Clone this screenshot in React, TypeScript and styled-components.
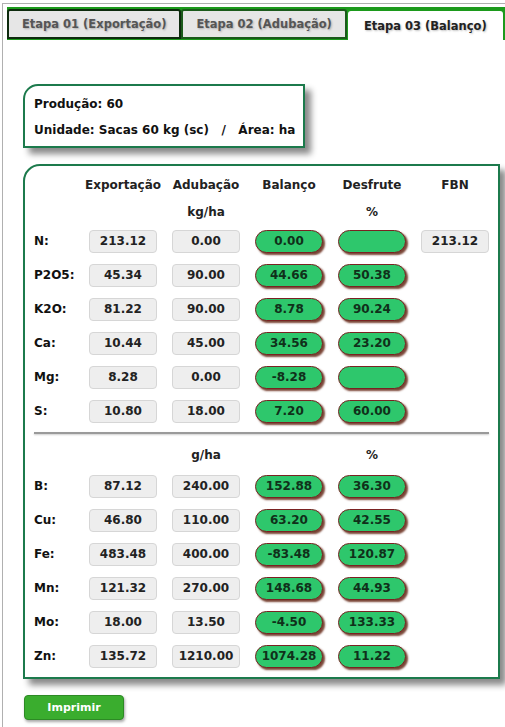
import React from 'react';
import styled, { createGlobalStyle } from 'styled-components';

const GlobalStyle = createGlobalStyle`
  html, body {
    margin: 0;
    padding: 0;
    background: #ffffff;
    overflow: hidden;
  }
  body {
    font-family: "DejaVu Sans", Verdana, sans-serif;
    font-size: 12px;
    color: #222;
  }
`;

type Row = {
  label: string;
  exp: string;
  adu: string;
  bal: string;
  des: string;
  fbn?: string;
};

const macro: Row[] = [
  { label: 'N:', exp: '213.12', adu: '0.00', bal: '0.00', des: '', fbn: '213.12' },
  { label: 'P2O5:', exp: '45.34', adu: '90.00', bal: '44.66', des: '50.38' },
  { label: 'K2O:', exp: '81.22', adu: '90.00', bal: '8.78', des: '90.24' },
  { label: 'Ca:', exp: '10.44', adu: '45.00', bal: '34.56', des: '23.20' },
  { label: 'Mg:', exp: '8.28', adu: '0.00', bal: '-8.28', des: '' },
  { label: 'S:', exp: '10.80', adu: '18.00', bal: '7.20', des: '60.00' },
];

const micro: Row[] = [
  { label: 'B:', exp: '87.12', adu: '240.00', bal: '152.88', des: '36.30' },
  { label: 'Cu:', exp: '46.80', adu: '110.00', bal: '63.20', des: '42.55' },
  { label: 'Fe:', exp: '483.48', adu: '400.00', bal: '-83.48', des: '120.87' },
  { label: 'Mn:', exp: '121.32', adu: '270.00', bal: '148.68', des: '44.93' },
  { label: 'Mo:', exp: '18.00', adu: '13.50', bal: '-4.50', des: '133.33' },
  { label: 'Zn:', exp: '135.72', adu: '1210.00', bal: '1074.28', des: '11.22' },
];

const tabs = [
  { title: 'Etapa 01 (Exportação)', border: '#0d2a0d' },
  { title: 'Etapa 02 (Adubação)', border: '#1b5a1b' },
  { title: 'Etapa 03 (Balanço)', active: true },
];

const App: React.FC = () => {
  const renderRows = (rows: Row[]) =>
    rows.map((r) => (
      <DataRow key={r.label}>
        <Label>{r.label}</Label>
        <Cell>{r.exp}</Cell>
        <Cell>{r.adu}</Cell>
        <Pill>{r.bal}</Pill>
        <Pill>{r.des}</Pill>
        {r.fbn ? <Cell>{r.fbn}</Cell> : <span />}
      </DataRow>
    ));

  return (
    <>
      <GlobalStyle />
      <Frame>
        <TabBar>
          {tabs.map((t) => (
            <Tab key={t.title} $active={t.active} $border={t.border}>
              {t.title}
            </Tab>
          ))}
        </TabBar>
        <Panel>
          <InfoBox>
            <InfoLine>Produção: 60</InfoLine>
            <InfoLine>Unidade: Sacas 60 kg (sc)&nbsp;&nbsp; /&nbsp;&nbsp; Área: ha</InfoLine>
          </InfoBox>
          <TableBox>
            <HeadRow>
              <span />
              <Head>Exportação</Head>
              <Head>Adubação</Head>
              <Head>Balanço</Head>
              <Head>Desfrute</Head>
              <Head>FBN</Head>
            </HeadRow>
            <UnitRow $top={11} $bottom={9}>
              <span />
              <span />
              <Head>kg/ha</Head>
              <span />
              <Head>%</Head>
              <span />
            </UnitRow>
            {renderRows(macro)}
            <Divider />
            <UnitRow $top={13} $bottom={11}>
              <span />
              <span />
              <Head>g/ha</Head>
              <span />
              <Head>%</Head>
              <span />
            </UnitRow>
            {renderRows(micro)}
          </TableBox>
          <PrintButton>Imprimir</PrintButton>
        </Panel>
      </Frame>
    </>
  );
};

export default App;

const Frame = styled.div`
  margin: 3px 0 0 2px;
  width: 503px;
  height: 730px;
  border: 1px solid #b0b0b0;
  border-right: none;
  padding: 3px 0 0 4px;
  box-sizing: border-box;
`;

const TabBar = styled.div`
  display: flex;
  align-items: flex-end;
  height: 33px;
  background: #1c9a1c;
  padding-top: 2px;
  box-sizing: border-box;
`;

const Tab = styled.div<{ $active?: boolean; $border?: string }>`
  box-sizing: border-box;
  height: ${(p) => (p.$active ? '29px' : '30px')};
  align-self: ${(p) => (p.$active ? 'flex-end' : 'flex-start')};
  padding: 0 ${(p) => (p.$active ? '16px' : '13px')};
  display: flex;
  align-items: center;
  white-space: nowrap;
  font-weight: bold;
  font-size: 11.5px;
  border-radius: 3px 3px 0 0;
  background: ${(p) => (p.$active ? '#ffffff' : '#e6e6e6')};
  color: ${(p) => (p.$active ? '#222' : '#555')};
  border: ${(p) => (p.$active ? 'none' : `2px solid ${p.$border}`)};
  margin-left: ${(p) => (p.$active ? '1px' : '0')};
  text-shadow: 1px 1px 2px rgba(0, 0, 0, 0.25);
`;

const Panel = styled.div`
  padding: 44px 0 0 16px;
`;

const InfoBox = styled.div`
  width: 282px;
  box-sizing: border-box;
  height: 64px;
  border: 2px solid #1c7a4c;
  border-top-left-radius: 15px;
  background: #fff;
  box-shadow: 6px 6px 6px #8a8a8a;
  padding: 10px 0 0 9px;
`;

const InfoLine = styled.div`
  font-weight: bold;
  color: #111;
  line-height: 16px;
  margin-bottom: 10px;
  white-space: nowrap;
`;

const TableBox = styled.div`
  margin-top: 16px;
  width: 477px;
  height: 515px;
  box-sizing: border-box;
  border: 2px solid #1c7a4c;
  border-top-left-radius: 17px;
  background: #fff;
  box-shadow: 6px 6px 6px #8a8a8a;
  padding: 11px 0 0 9px;
`;

const grid = `
  display: grid;
  grid-template-columns: 40px 68px 68px 68px 68px 68px;
  column-gap: 15px;
  align-items: center;
`;

const HeadRow = styled.div`
  ${grid}
  height: 16px;
`;

const UnitRow = styled.div<{ $top: number; $bottom: number }>`
  ${grid}
  height: 16px;
  margin-top: ${(p) => p.$top}px;
  margin-bottom: ${(p) => p.$bottom}px;
`;

const Head = styled.div`
  font-weight: bold;
  text-align: center;
  white-space: nowrap;
  color: #222;
  justify-self: center;
`;

const DataRow = styled.div`
  ${grid}
  height: 24px;
  margin-bottom: 10px;
`;

const Label = styled.div`
  font-weight: bold;
  color: #111;
  white-space: nowrap;
`;

const Cell = styled.div`
  height: 23px;
  box-sizing: border-box;
  background: #eeeeee;
  border: 1px solid #d6d6d6;
  border-radius: 4px;
  display: flex;
  align-items: center;
  justify-content: center;
  font-weight: bold;
  color: #222;
`;

const Pill = styled.div`
  height: 23px;
  box-sizing: border-box;
  background: #2ec76c;
  border: 1px solid #7a2222;
  border-radius: 12px;
  box-shadow: 2px 2px 2px #7a4536;
  display: flex;
  align-items: center;
  justify-content: center;
  font-weight: bold;
  color: #10301a;
`;

const Divider = styled.div`
  width: 455px;
  height: 2px;
  background: #9a9a9a;
  box-shadow: 0 1px 2px #cccccc;
  margin-top: -1px;
`;

const PrintButton = styled.button`
  margin-top: 16px;
  margin-left: 1px;
  width: 100px;
  height: 25px;
  background: #3aad2e;
  border: 1px solid #2d8a25;
  border-radius: 4px;
  box-shadow: 1px 2px 3px rgba(0, 0, 0, 0.35);
  color: #fff;
  font-family: "DejaVu Sans", Verdana, sans-serif;
  font-weight: bold;
  font-size: 11px;
  cursor: pointer;
`;
